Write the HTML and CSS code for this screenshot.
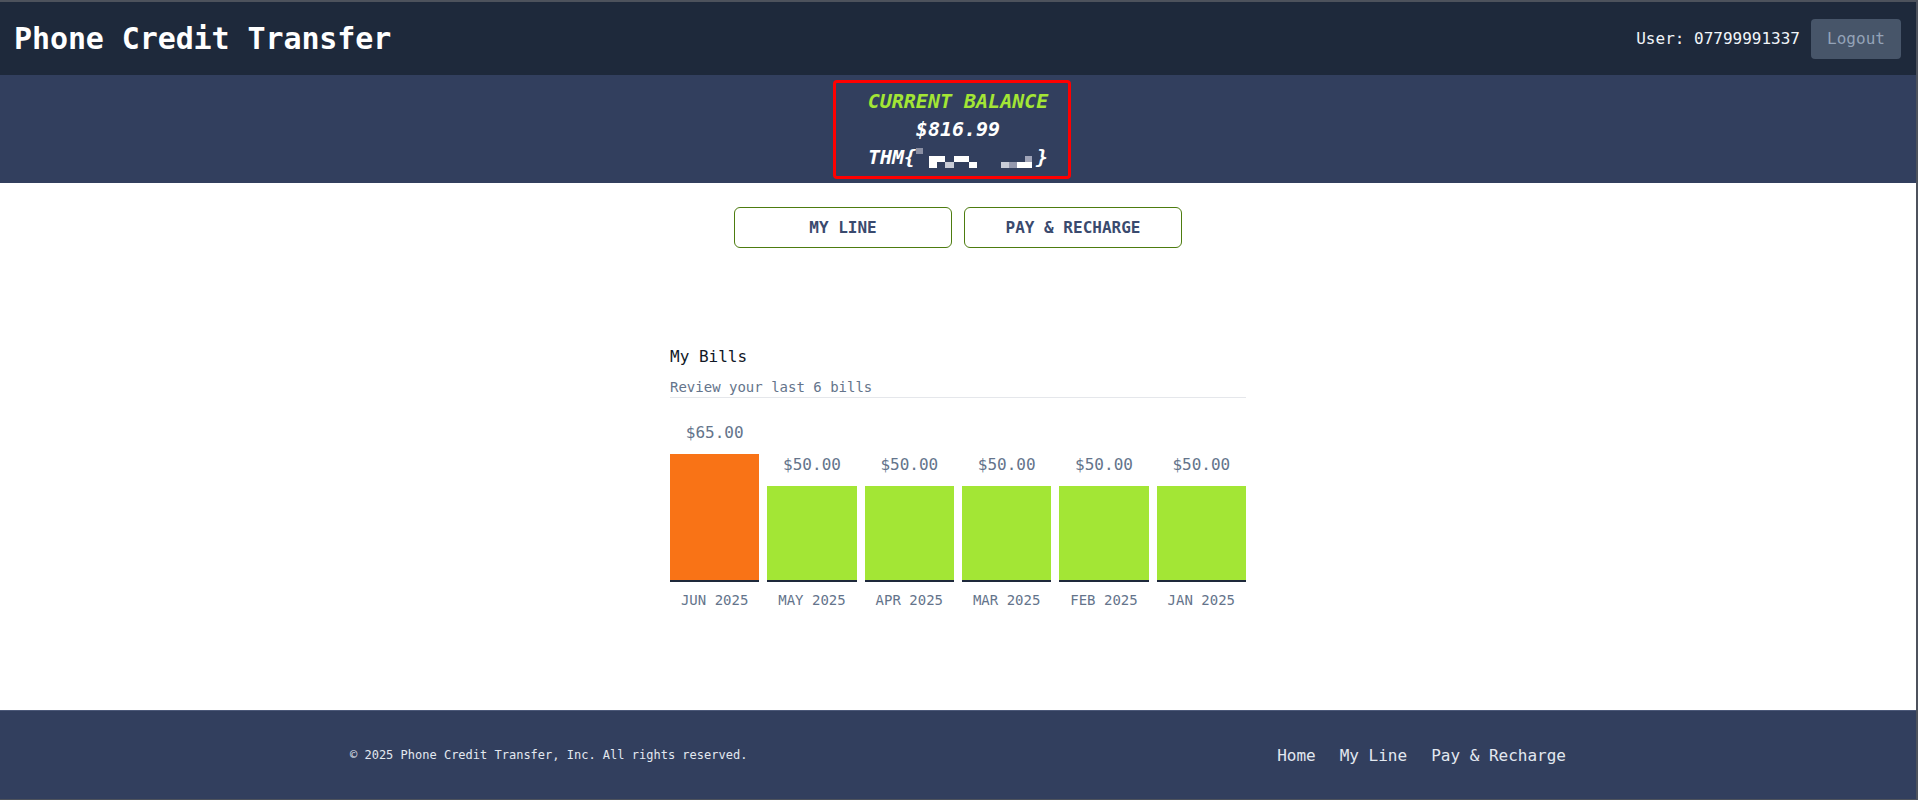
FILE: index.html
```html
<!DOCTYPE html>
<html lang="en">
<head>
<meta charset="utf-8">
<title>Phone Credit Transfer</title>
<link rel="stylesheet" href="styles.css">
</head>
<body>
<div class="page">
  <header class="topbar">
    <h1 class="brand">Phone Credit Transfer</h1>
    <div class="user">
      <span class="user-label">User: 07799991337</span>
      <button class="logout" type="button">Logout</button>
    </div>
  </header>

  <section class="balance-band">
    <div class="balance-box">
      <div class="bal-title">CURRENT BALANCE</div>
      <div class="bal-amount">$816.99</div>
      <div class="bal-flag">THM{<svg class="redact" width="120" height="28" viewBox="0 0 120 28" aria-hidden="true">
          <rect x="0" y="5" width="7" height="6" fill="#8a8fa3"/>
          <rect x="13" y="13" width="16" height="6" fill="#ffffff"/>
          <rect x="38" y="13" width="15" height="6" fill="#ffffff"/>
          <rect x="13" y="19" width="8" height="6" fill="#ffffff"/>
          <rect x="29" y="19" width="9" height="6" fill="#c8cbd6"/>
          <rect x="53" y="19" width="8" height="6" fill="#ffffff"/>
          <rect x="109" y="13" width="7" height="6" fill="#a0a4b8"/>
          <rect x="85" y="19" width="8" height="6" fill="#c8ccd8"/>
          <rect x="93" y="19" width="8" height="6" fill="#9498ad"/>
          <rect x="101" y="19" width="15" height="6" fill="#ffffff"/>
        </svg>}</div>
    </div>
  </section>

  <main class="main">
    <nav class="tabs">
      <a class="tab" href="#">MY LINE</a>
      <a class="tab" href="#">PAY &amp; RECHARGE</a>
    </nav>

    <section class="bills">
      <h2 class="bills-title">My Bills</h2>
      <p class="bills-sub">Review your last 6 bills</p>
      <div class="chart">
        <div class="col">
          <span class="val">$65.00</span>
          <div class="bar bar-high" style="height:126px"></div>
          <span class="month">JUN 2025</span>
        </div>
        <div class="col">
          <span class="val">$50.00</span>
          <div class="bar" style="height:94px"></div>
          <span class="month">MAY 2025</span>
        </div>
        <div class="col">
          <span class="val">$50.00</span>
          <div class="bar" style="height:94px"></div>
          <span class="month">APR 2025</span>
        </div>
        <div class="col">
          <span class="val">$50.00</span>
          <div class="bar" style="height:94px"></div>
          <span class="month">MAR 2025</span>
        </div>
        <div class="col">
          <span class="val">$50.00</span>
          <div class="bar" style="height:94px"></div>
          <span class="month">FEB 2025</span>
        </div>
        <div class="col">
          <span class="val">$50.00</span>
          <div class="bar" style="height:94px"></div>
          <span class="month">JAN 2025</span>
        </div>
      </div>
    </section>
  </main>

  <footer class="footer">
    <div class="footer-inner">
      <p class="copy">© 2025 Phone Credit Transfer, Inc. All rights reserved.</p>
      <nav class="footer-links">
        <a href="#">Home</a>
        <a href="#">My Line</a>
        <a href="#">Pay &amp; Recharge</a>
      </nav>
    </div>
  </footer>
</div>
</body>
</html>
```

FILE: styles.css
```css
* { box-sizing: border-box; }

html, body {
  margin: 0;
  padding: 0;
  background: #ffffff;
}

body {
  font-family: "DejaVu Sans Mono", "Liberation Mono", monospace;
  color: #111827;
}

.page {
  height: 800px;
  display: flex;
  flex-direction: column;
  border-top: 2px solid #4d525c;
  border-right: 2px solid #4d525c;
  border-bottom: 1px solid #4d525c;
  overflow: hidden;
}

/* Header */
.topbar {
  height: 73px;
  flex: none;
  background: #1e293b;
  display: flex;
  align-items: center;
  justify-content: space-between;
  padding: 0 15px 0 14px;
}

.brand {
  margin: 0;
  font-size: 30px;
  line-height: 36px;
  font-weight: bold;
  color: #ffffff;
  letter-spacing: -0.1px;
}

.user {
  display: flex;
  align-items: center;
  gap: 11px;
}

.user-label {
  font-size: 16px;
  color: #f1f5f9;
}

.logout {
  font-family: inherit;
  font-size: 16px;
  width: 90px;
  height: 40px;
  border: none;
  border-radius: 4px;
  background: #475569;
  color: #94a3b8;
  padding: 0;
}

/* Balance band */
.balance-band {
  height: 108px;
  flex: none;
  background: #323f5e;
  display: flex;
  justify-content: center;
  padding-top: 5px;
}

.balance-box {
  width: 238px;
  height: 99px;
  border: 3px solid #ff0000;
  border-radius: 4px;
  padding: 4px 0 4px 13px;
  margin-right: 13px;
  text-align: center;
  font-style: italic;
  font-weight: bold;
  font-size: 20px;
  line-height: 28px;
  color: #ffffff;
}

.bal-title {
  color: #a3e635;
}

.bal-flag {
  display: flex;
  justify-content: center;
  align-items: center;
}

.redact {
  display: block;
}

/* Main */
.main {
  flex: 1;
  background: #ffffff;
  padding-top: 24px;
}

.tabs {
  display: flex;
  justify-content: center;
  gap: 12px;
}

.tab {
  width: 218px;
  height: 41px;
  display: flex;
  align-items: center;
  justify-content: center;
  border: 1px solid #4d7c0f;
  border-radius: 6px;
  color: #3a4a6e;
  font-weight: bold;
  font-size: 16px;
  text-decoration: none;
}

.bills {
  max-width: 576px;
  margin: 97px auto 0;
}

.bills-title {
  margin: 0;
  font-size: 16px;
  line-height: 24px;
  font-weight: normal;
  color: #111827;
}

.bills-sub {
  margin: 8px 0 0;
  font-size: 14px;
  line-height: 20px;
  color: #64748b;
  padding-bottom: 0;
  border-bottom: 1px solid #e5e7eb;
}

.chart {
  margin-top: 23px;
  display: grid;
  grid-template-columns: repeat(6, 1fr);
  column-gap: 8px;
  align-items: end;
}

.col {
  display: flex;
  flex-direction: column;
  align-items: stretch;
  text-align: center;
}

.val {
  font-size: 16px;
  line-height: 24px;
  color: #64748b;
  margin-bottom: 9px;
}

.bar {
  background: #a3e635;
  border-bottom: 2px solid #1e293b;
  box-sizing: content-box;
}

.bar-high {
  background: #f97316;
}

.month {
  margin-top: 8px;
  font-size: 14px;
  line-height: 20px;
  color: #64748b;
}

/* Footer */
.footer {
  height: 89px;
  flex: none;
  background: #323f5e;
  border-top: 1px solid #4b5878;
}

.footer-inner {
  max-width: 1280px;
  height: 100%;
  margin: 0 auto;
  padding: 0 32px;
  display: flex;
  align-items: center;
  justify-content: space-between;
}

.copy {
  margin: 0;
  font-size: 12px;
  color: #e2e8f0;
}

.footer-links {
  display: flex;
  gap: 24px;
}

.footer-links a {
  font-size: 16px;
  color: #e2e8f0;
  text-decoration: none;
}
```
